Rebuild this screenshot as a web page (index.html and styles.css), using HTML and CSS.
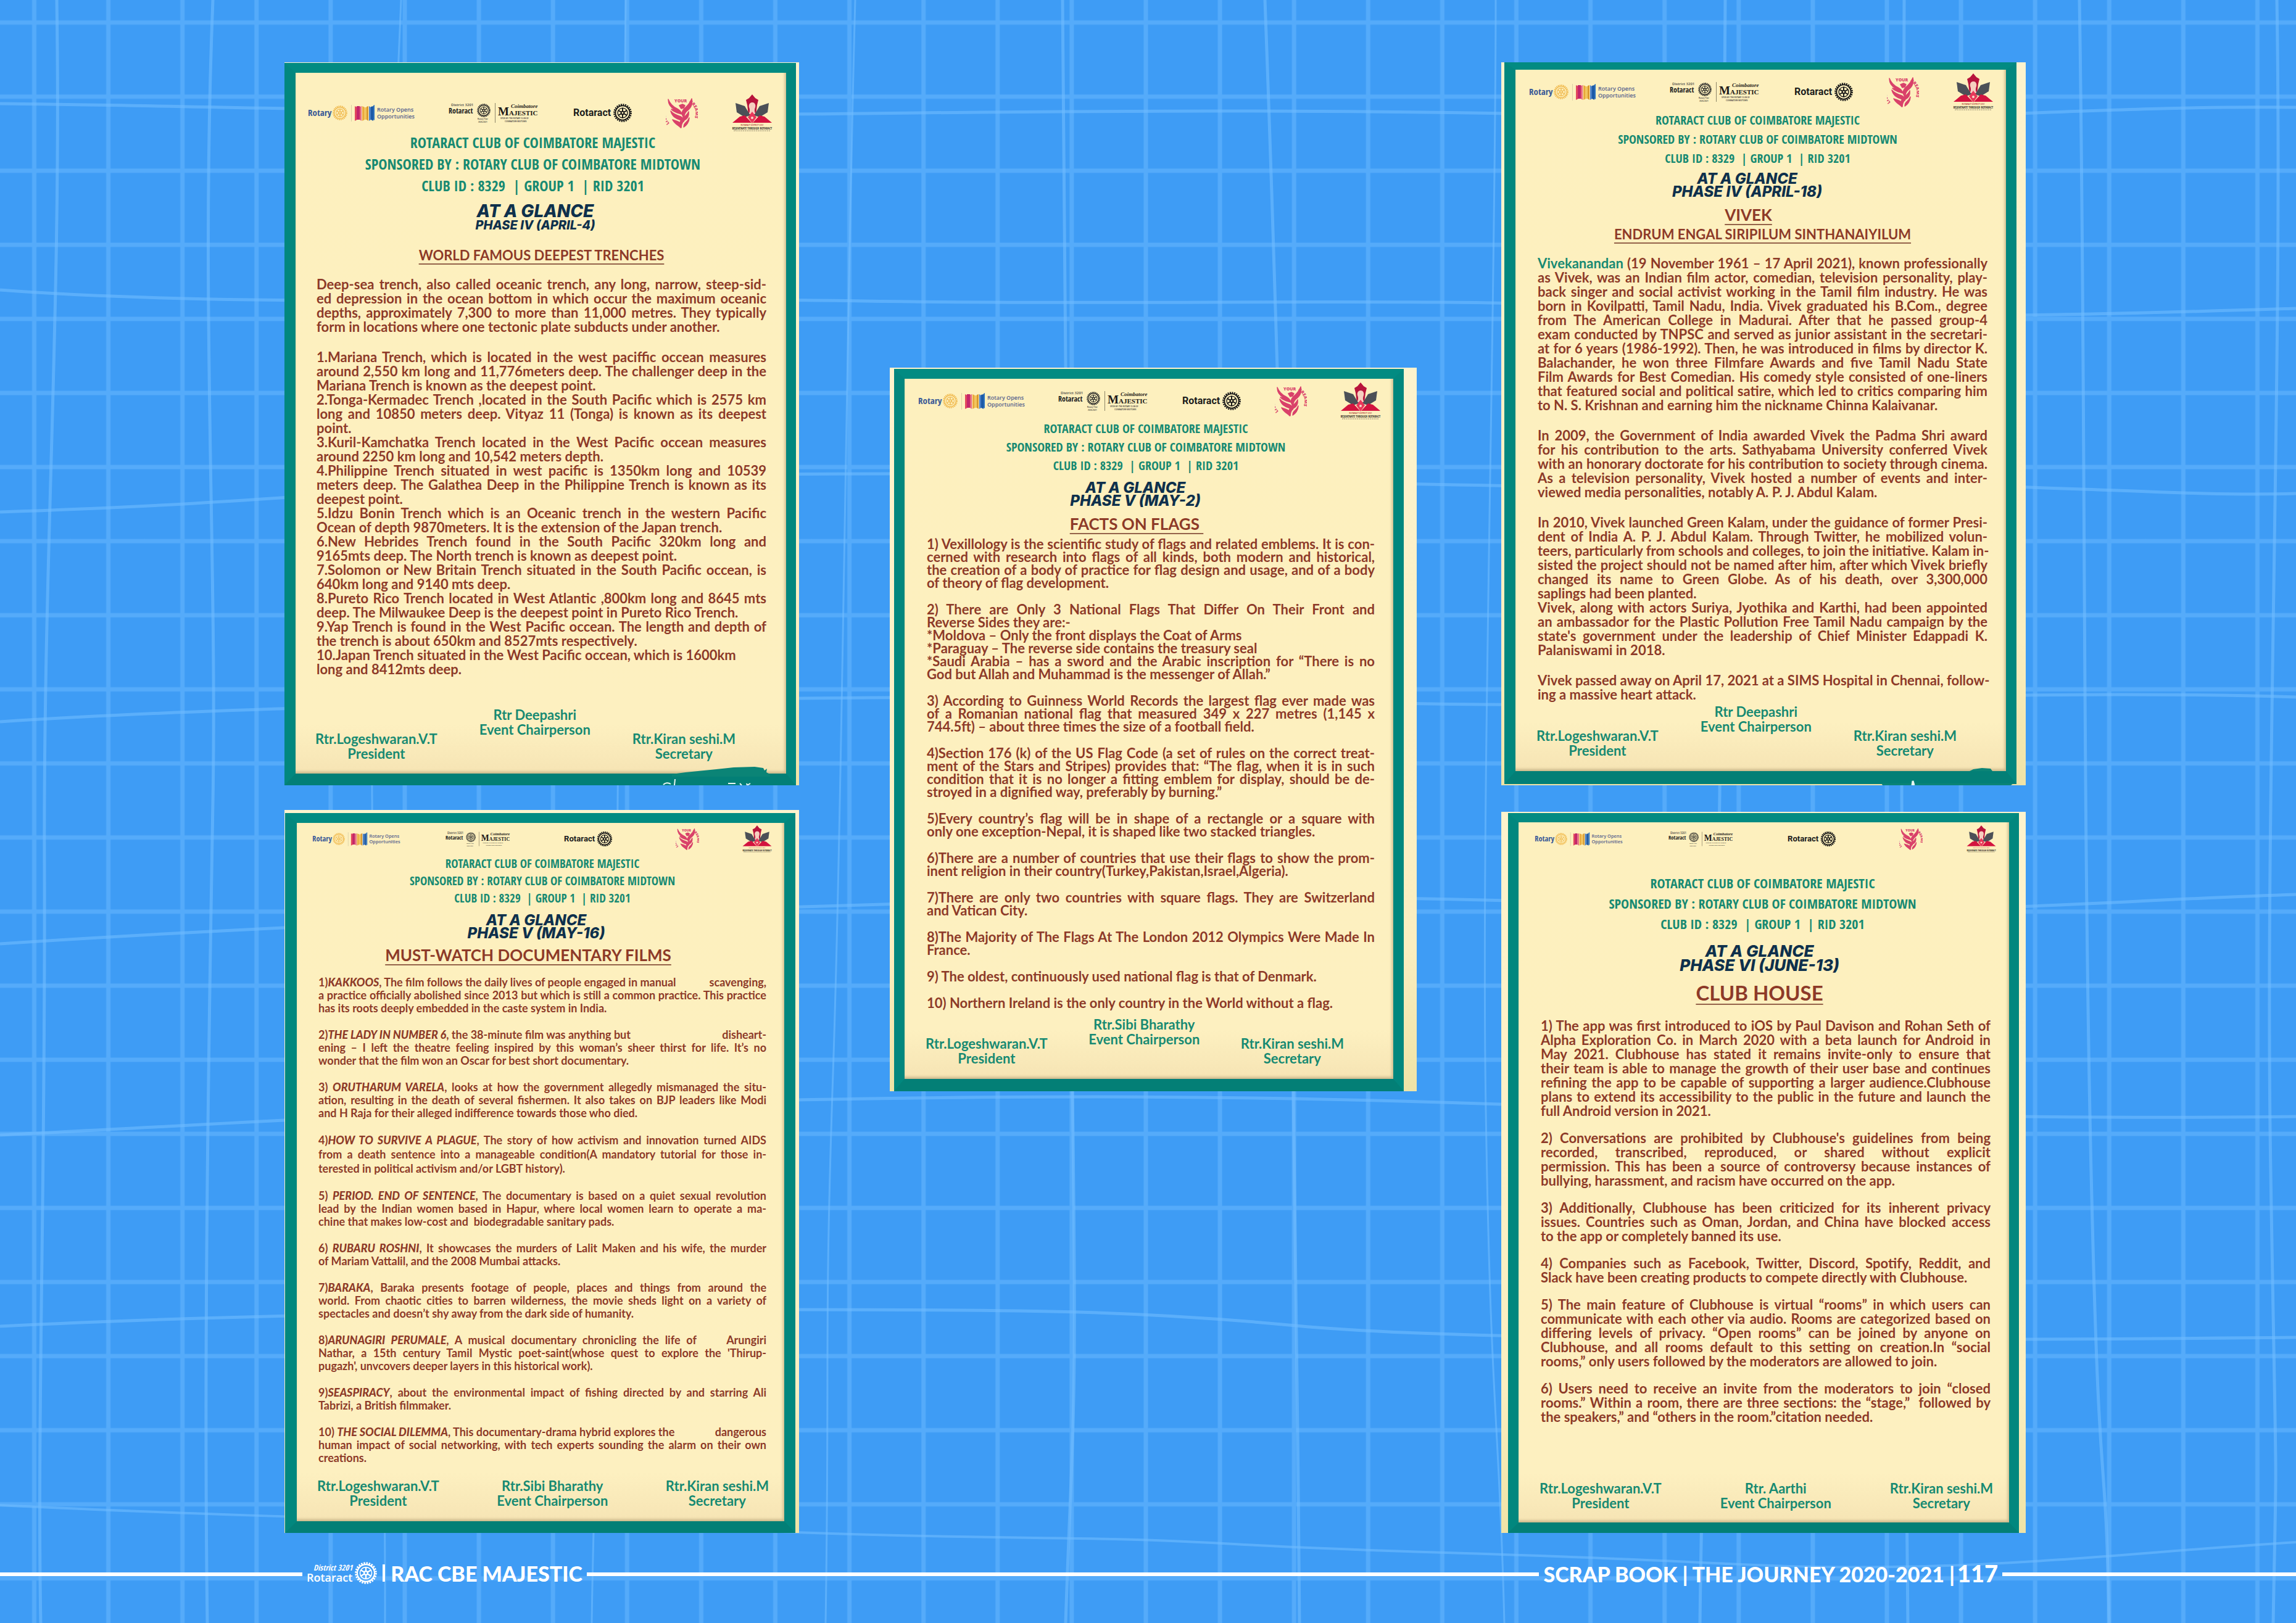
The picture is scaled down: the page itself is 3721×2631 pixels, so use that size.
FILE: index.html
```html
<!DOCTYPE html>
<html lang="en">
<head>
<meta charset="utf-8">
<title>Scrap Book | The Journey 2020-2021</title>
<link rel="stylesheet" href="styles.css">
</head>
<body>
<svg class="defs" aria-hidden="true">
  <symbol id="gear" viewBox="0 0 40 40">
    <g fill="none" stroke="currentColor">
      <circle cx="20" cy="20" r="18" stroke-width="3.6" stroke-dasharray="2.8 1.912"/>
      <circle cx="20" cy="20" r="15.5" stroke-width="2.4"/>
      <circle cx="20" cy="20" r="10.6" stroke-width="1.8"/>
      <circle cx="20" cy="20" r="3.2" stroke-width="2.6"/>
      <path d="M20 16V9M20 24v7M16.500 18l-6-3.500M23.500 22l6 3.500M23.500 18l6-3.500M16.500 22l-6 3.500" stroke-width="2.6"/>
    </g>
  </symbol>
  <symbol id="rotary" viewBox="0 0 173 34">
    <text x="0" y="22" font-size="15" class="lg-cond" fill="#3a5a96">Rotary</text>
    <use href="#gear" x="40" y="5" width="24" height="24" color="#f1bd55"/>
    <path d="M70.500 4v27" stroke="#d9cfa5"/>
    <path d="M76 6l4 2v20l-4 2z" fill="#e2475f"/><path d="M79 6h5v22h-5z" fill="#c4266a"/><path d="M84 7l3-1v24l-3-2z" fill="#e56a7f"/>
    <path d="M88 6l4 2v20l-4 2z" fill="#e9a83d"/><path d="M91 8h4v20h-4z" fill="#f2c55c"/><path d="M95 7l3-1v24l-3-2z" fill="#d99a2f"/>
    <path d="M99 6l3 2v20l-3 2z" fill="#4a7fc4"/><path d="M102 7l4-1v24l-4-2z" fill="#1d5aa6"/><path d="M106 5l2-1v25l-2-1z" fill="#2c72bf"/>
    <text x="112" y="15" font-size="9" class="lg-sans" fill="#56618c">Rotary Opens</text>
    <text x="112" y="26" font-size="9" class="lg-sans" fill="#56618c">Opportunities</text>
  </symbol>
  <symbol id="majestic" viewBox="0 0 147 34">
    <text x="4" y="6" font-size="6" class="lg-sans" fill="#444">District 3201</text>
    <text x="0" y="18" font-size="12" class="lg-cond" fill="#222">Rotaract</text>
    <use href="#gear" x="46" y="2" width="22" height="22" color="#2a2a28"/>
    <text x="47" y="28" font-size="3" class="lg-sans" fill="#333">Rotary Year</text>
    <text x="48" y="33" font-size="3" class="lg-sans" fill="#333">2020-2021</text>
    <path d="M75.500 1v32" stroke="#8d8568"/>
    <text x="80" y="21" font-size="19" class="lg-serif" fill="#1d1a18">M</text>
    <text x="98" y="21" font-size="11" class="lg-serif" fill="#1d1a18">AJESTIC</text>
    <text x="101" y="9" font-size="9" class="lg-script" fill="#1d1a18">Coimbatore</text>
    <text x="84" y="27" font-size="3" class="lg-sans" fill="#333">SPON BY: THE ROTARY CLUB OF</text>
    <text x="91" y="32" font-size="3" class="lg-sans" fill="#333">COIMBATORE MIDTOWN</text>
  </symbol>
  <symbol id="rotaract" viewBox="0 0 96 34">
    <text x="0" y="22" font-size="16" class="lg-rob" fill="#1b1b1b">Rotaract</text>
    <use href="#gear" x="65" y="2" width="30" height="30" color="#151515"/>
  </symbol>
  <symbol id="dreams" viewBox="0 0 52 50">
    <defs><path id="ring" d="M6 42A21 22 0 0 1 26 5A21 21 0 0 1 38 44"/></defs>
    <g fill="#d9416a" stroke="#d9416a" stroke-width="1.5" stroke-linejoin="round">
      <path d="M4 3c3 8 8 12 14 15c4 2 7 5 8 9c-7-2-13-3-17-8c3 1 5 1 6 1c-6-3-11-9-11-17z"/>
      <path d="M42 2c2 10-2 16-8 20c-3 3-5 6-4 12c-4-5-5-11 0-16c4-4 9-7 12-16z"/>
      <path d="M22 13l5-2l4 2l-2 4l-4 1z"/>
      <path d="M8 22c4 5 10 7 16 9c4 2 6 5 5 8c-6-4-17-3-21-17z"/>
      <path d="M37 23c1 8-3 12-7 14c-3 3-5 6-5 12c-4-7-1-13 3-16c4-3 7-5 9-10z"/>
      <path d="M11 36c5 2 11 3 13 6c1 2 1 5 0 7c-3-4-9-5-13-13z"/>
      <path d="M38 33c-2 5-5 7-7 9c-2 2-2 4-2 6c4-2 9-8 9-15z"/>
    </g>
    <text font-size="7" class="lg-bold" fill="#d9416a"><textPath href="#ring" startOffset="0">LIVE</textPath></text>
    <text font-size="7" class="lg-bold" fill="#d9416a" x="14" y="8">YOUR</text>
    <text font-size="7" class="lg-bold" fill="#d9416a"><textPath href="#ring" startOffset="68">DREAMS</textPath></text>
  </symbol>
  <symbol id="lotus" viewBox="0 0 66 60">
    <path d="M33 0l5 6l5 3l-2 8l-2 16h-12l-2-16l-2-8l5-3z" fill="#b8143c"/>
    <path d="M33 13c5 0 6 5 5 8c-2 5-1 8 1 11h-12c2-3 3-6 1-11c-1-4 1-8 5-8z" fill="#f6cfc0"/>
    <path d="M6 14l15 5l9 15l-9 3l-13-8z" fill="#4c5057"/><path d="M60 14l-15 5l-9 15l9 3l13-8z" fill="#4c5057"/>
    <path d="M1 46l12-10l8-2l11 12z" fill="#d3143f"/><path d="M65 46l-12-10l-8-2l-11 12z" fill="#d3143f"/>
    <path d="M33 28l7 9l-7 10l-7-10z" fill="#e8375a"/><circle cx="33" cy="38" r="2" fill="#f9d9c8"/>
    <text x="33" y="51" text-anchor="middle" font-size="3" class="lg-sans" fill="#a33">ROTARACT DISTRICT 3201</text>
    <text x="33" y="57" text-anchor="middle" font-size="5" class="lg-cond" fill="#35302a">REJUVENATE THROUGH ROTARACT</text>
    <path d="M3 59h60" stroke="#8b8166" stroke-dasharray="2 1"/>
  </symbol>
</svg>

<svg class="grid-art" viewBox="0 0 3721 2631" preserveAspectRatio="none" aria-hidden="true">
  <defs><pattern id="squares" x="-5" y="-24" width="120.100" height="120.100" patternUnits="userSpaceOnUse"><path d="M60.500 0v120.100M0 60.500h120.100" stroke="#5cb0fc" stroke-opacity=".75" stroke-width="7"/></pattern></defs>
  <rect width="3721" height="2631" fill="#3e9cf5"/>
  <rect width="3721" height="2631" fill="url(#squares)"/>
  <g fill="none" stroke="#6fbcff" stroke-opacity=".6" stroke-width="5">
    <path d="M92 0C100 500 70 900 72 1400S60 2300 66 2631"/>
    <path d="M345 0C325 500 352 900 345 1300S330 2200 336 2631"/>
    <path d="M650 0C630 500 600 900 603 1290S625 2200 624 2631" stroke-width="3"/>
    <path d="M1014 0C1008 500 1003 900 1001 1300S965 2200 959 2631" stroke-width="3"/>
    <path d="M1386 0C1372 500 1365 1300 1350 1740S1345 2200 1338 2631" stroke-width="3"/>
    <path d="M1722 0C1728 400 1730 1200 1738 1768S1738 2300 1727 2631"/>
    <path d="M2050 0C2065 400 2090 1200 2096 1768S2104 2300 2106 2631"/>
    <path d="M2424 0C2424 500 2400 1300 2408 1800S2430 2300 2438 2631" stroke-width="3"/>
    <path d="M2796 0C2790 500 2792 900 2787 1290S2760 2200 2755 2631"/>
    <path d="M3086 0C3085 500 3082 900 3082 1290S3088 2200 3092 2631"/>
    <path d="M3370 0C3380 600 3375 1300 3389 1900S3412 2300 3418 2631"/>
    <path d="M3690 0C3700 600 3670 1300 3680 1900S3690 2300 3684 2631"/>
    <path d="M0 168C400 172 900 190 1400 184S2300 178 2700 190S3400 170 3721 174"/>
    <path d="M0 470C400 500 900 480 1400 488S2300 480 2700 500S3400 510 3721 500"/>
    <path d="M0 830C300 820 440 808 700 790S1200 768 1440 768S2700 800 3000 790S3500 806 3721 800"/>
    <path d="M0 1170C300 1150 700 1140 1300 1132S2300 1150 2700 1140S3400 1120 3721 1130"/>
    <path d="M0 1530C300 1510 700 1490 1300 1470S2300 1450 2700 1470S3400 1460 3721 1450"/>
    <path d="M0 1840C400 1820 900 1790 1290 1783S2000 1775 2430 1790S3300 1815 3721 1810"/>
    <path d="M0 2150C400 2130 900 2123 1290 2123S1850 2125 2100 2149S3000 2175 3721 2168"/>
    <path d="M0 2440C400 2460 900 2470 1290 2484S1740 2488 2000 2503S2430 2516 2800 2535S3400 2520 3721 2500" stroke-width="4"/>
  </g>
</svg>

<main class="board">
  <div class="column left">
    <article class="card trenches">
      <div class="paper">
        <div class="logos"><svg class="l1"><use href="#rotary"/></svg><svg class="l2"><use href="#majestic"/></svg><svg class="l3"><use href="#rotaract"/></svg><svg class="l4"><use href="#dreams"/></svg><svg class="l5"><use href="#lotus"/></svg></div>
        <p class="club">ROTARACT CLUB OF COIMBATORE MAJESTIC<br>SPONSORED BY : ROTARY CLUB OF COIMBATORE MIDTOWN<br>CLUB ID : 8329 &nbsp;| GROUP 1 &nbsp;| RID 3201</p>
        <p class="glance"><span>AT A GLANCE</span><span class="phase">PHASE IV (APRIL-4)</span></p>
        <h2>WORLD FAMOUS DEEPEST TRENCHES</h2>
        <div class="text">
          <p><span>Deep-sea trench, also called oceanic trench, any long, narrow, steep-sid-</span><span>ed depression in the ocean bottom in which occur the maximum oceanic</span><span>depths, approximately 7,300 to more than 11,000 metres. They typically</span><span>form in locations where one tectonic plate subducts under another.</span></p>
          <p><span>1.Mariana Trench, which is located in the west paciffic occean measures</span><span>around 2,550 km long and 11,776meters deep. The challenger deep in the</span><span>Mariana Trench is known as the deepest point.</span></p>
          <p class="run"><span>2.Tonga-Kermadec Trench ,located in the South Pacific which is 2575 km</span><span>long and 10850 meters deep. Vityaz 11 (Tonga) is known as its deepest</span><span>point.</span></p>
          <p class="run"><span>3.Kuril-Kamchatka Trench located in the West Pacific occean measures</span><span>around 2250 km long and 10,542 meters depth.</span></p>
          <p class="run"><span>4.Philippine Trench situated in west pacific is 1350km long and 10539</span><span>meters deep. The Galathea Deep in the Philippine Trench is known as its</span><span>deepest point.</span></p>
          <p class="run"><span>5.Idzu Bonin Trench which is an Oceanic trench in the western Pacific</span><span>Ocean of depth 9870meters. It is the extension of the Japan trench.</span></p>
          <p class="run"><span>6.New Hebrides Trench found in the South Pacific 320km long and</span><span>9165mts deep. The North trench is known as deepest point.</span></p>
          <p class="run"><span>7.Solomon or New Britain Trench situated in the South Pacific occean, is</span><span>640km long and 9140 mts deep.</span></p>
          <p class="run"><span>8.Pureto Rico Trench located in West Atlantic ,800km long and 8645 mts</span><span>deep. The Milwaukee Deep is the deepest point in Pureto Rico Trench.</span></p>
          <p class="run"><span>9.Yap Trench is found in the West Pacific occean. The length and depth of</span><span>the trench is about 650km and 8527mts respectively.</span></p>
          <p class="run ragged"><span>10.Japan Trench situated in the West Pacific occean, which is 1600km</span><span>long and 8412mts deep.</span></p>
        </div>
        <footer class="signs stepped"><p>Rtr.Logeshwaran.V.T<br>President</p><p class="chair">Rtr Deepashri<br>Event Chairperson</p><p>Rtr.Kiran seshi.M<br>Secretary</p></footer>
      </div>
      <svg class="brush" viewBox="0 0 220 32" aria-hidden="true"><path d="M40 14l22-3l20-2l30-3l28-3l34-1l14 2l2 4l4-3l-1 6l6 3v4H40z" fill="#0b8476"/><path d="M26 31c3-3 8-4 12-1M44 32l1-10M131 29h12M150 29l3 3M161 29l1 3l5-3" fill="none" stroke="#e8f7f2" stroke-width="2"/></svg>
    </article>

    <article class="card films">
      <div class="paper">
        <div class="logos small"><svg class="l1"><use href="#rotary"/></svg><svg class="l2"><use href="#majestic"/></svg><svg class="l3"><use href="#rotaract"/></svg><svg class="l4"><use href="#dreams"/></svg><svg class="l5"><use href="#lotus"/></svg></div>
        <p class="club">ROTARACT CLUB OF COIMBATORE MAJESTIC<br>SPONSORED BY : ROTARY CLUB OF COIMBATORE MIDTOWN<br>CLUB ID : 8329 &nbsp;| GROUP 1 &nbsp;| RID 3201</p>
        <p class="glance"><span>AT A GLANCE</span><span>PHASE V (MAY-16)</span></p>
        <h2>MUST-WATCH DOCUMENTARY FILMS</h2>
        <div class="text">
          <p><span class="split"><span>1)<em>KAKKOOS</em>, The film follows the daily lives of people engaged in manual</span> <span>scavenging,</span></span><span>a practice officially abolished since 2013 but which is still a common practice. This practice</span><span>has its roots deeply embedded in the caste system in India.</span></p>
          <p><span class="split"><span>2)<em>THE LADY IN NUMBER 6</em>, the 38-minute film was anything but</span> <span>disheart-</span></span><span>ening – I left the theatre feeling inspired by this woman’s sheer thirst for life. It’s no</span><span>wonder that the film won an Oscar for best short documentary.</span></p>
          <p><span>3) <em>ORUTHARUM VARELA</em>, looks at how the government allegedly mismanaged the situ-</span><span>ation, resulting in the death of several fishermen. It also takes on BJP leaders like Modi</span><span>and H Raja for their alleged indifference towards those who died.</span></p>
          <p class="loose"><span>4)<em>HOW TO SURVIVE A PLAGUE</em>, The story of how activism and innovation turned AIDS</span><span>from a death sentence into a manageable condition(A mandatory tutorial for those in-</span><span>terested in political activism and/or LGBT history).</span></p>
          <p><span>5) <em>PERIOD. END OF SENTENCE</em>, The documentary is based on a quiet sexual revolution</span><span>lead by the Indian women based in Hapur, where local women learn to operate a ma-</span><span>chine that makes low-cost and &nbsp;biodegradable sanitary pads.</span></p>
          <p><span>6) <em>RUBARU ROSHNI</em>, It showcases the murders of Lalit Maken and his wife, the murder</span><span>of Mariam Vattalil, and the 2008 Mumbai attacks.</span></p>
          <p><span>7)<em>BARAKA</em>, Baraka presents footage of people, places and things from around the</span><span>world. From chaotic cities to barren wilderness, the movie sheds light on a variety of</span><span>spectacles and doesn’t shy away from the dark side of humanity.</span></p>
          <p><span>8)<em>ARUNAGIRI PERUMALE</em>, A musical documentary chronicling the life of &nbsp; &nbsp; Arungiri</span><span>Nathar, a 15th century Tamil Mystic poet-saint(whose quest to explore the 'Thirup-</span><span>pugazh', unvcovers deeper layers in this historical work).</span></p>
          <p><span>9)<em>SEASPIRACY</em>, about the environmental impact of fishing directed by and starring Ali</span><span>Tabrizi, a British filmmaker.</span></p>
          <p><span class="split"><span>10) <em>THE SOCIAL DILEMMA</em>, This documentary-drama hybrid explores the</span> <span>dangerous</span></span><span>human impact of social networking, with tech experts sounding the alarm on their own</span><span>creations.</span></p>
        </div>
        <footer class="signs"><p>Rtr.Logeshwaran.V.T<br>President</p><p class="chair">Rtr.Sibi Bharathy<br>Event Chairperson</p><p>Rtr.Kiran seshi.M<br>Secretary</p></footer>
      </div>
    </article>
  </div>

  <div class="column middle">
    <article class="card flags">
      <div class="paper">
        <div class="logos"><svg class="l1"><use href="#rotary"/></svg><svg class="l2"><use href="#majestic"/></svg><svg class="l3"><use href="#rotaract"/></svg><svg class="l4"><use href="#dreams"/></svg><svg class="l5"><use href="#lotus"/></svg></div>
        <p class="club">ROTARACT CLUB OF COIMBATORE MAJESTIC<br>SPONSORED BY : ROTARY CLUB OF COIMBATORE MIDTOWN<br>CLUB ID : 8329 &nbsp;| GROUP 1 &nbsp;| RID 3201</p>
        <p class="glance"><span>AT A GLANCE</span><span>PHASE V (MAY-2)</span></p>
        <h2>FACTS ON FLAGS&nbsp;</h2>
        <div class="text">
          <p><span>1) Vexillology is the scientific study of flags and related emblems. It is con-</span><span>cerned with research into flags of all kinds, both modern and historical,</span><span>the creation of a body of practice for flag design and usage, and of a body</span><span>of theory of flag development.</span></p>
          <p><span>2) There are Only 3 National Flags That Differ On Their Front and</span><span>Reverse Sides they are:-</span></p>
          <p class="run"><span>*Moldova – Only the front displays the Coat of Arms</span></p>
          <p class="run"><span>*Paraguay – The reverse side contains the treasury seal</span></p>
          <p class="run"><span>*Saudi Arabia – has a sword and the Arabic inscription for “There is no</span><span>God but Allah and Muhammad is the messenger of Allah.”</span></p>
          <p><span>3) According to Guinness World Records the largest flag ever made was</span><span>of a Romanian national flag that measured 349 x 227 metres (1,145 x</span><span>744.5ft) – about three times the size of a football field.</span></p>
          <p><span>4)Section 176 (k) of the US Flag Code (a set of rules on the correct treat-</span><span>ment of the Stars and Stripes) provides that: “The flag, when it is in such</span><span>condition that it is no longer a fitting emblem for display, should be de-</span><span>stroyed in a dignified way, preferably by burning.”</span></p>
          <p><span>5)Every country’s flag will be in shape of a rectangle or a square with</span><span>only one exception-Nepal, it is shaped like two stacked triangles.</span></p>
          <p><span>6)There are a number of countries that use their flags to show the prom-</span><span>inent religion in their country(Turkey,Pakistan,Israel,Algeria).</span></p>
          <p><span>7)There are only two countries with square flags. They are Switzerland</span><span>and Vatican City.</span></p>
          <p><span>8)The Majority of The Flags At The London 2012 Olympics Were Made In</span><span>France.</span></p>
          <p><span>9) The oldest, continuously used national flag is that of Denmark.</span></p>
          <p><span>10) Northern Ireland is the only country in the World without a flag.</span></p>
        </div>
        <footer class="signs stepped"><p>Rtr.Logeshwaran.V.T<br>President</p><p class="chair">Rtr.Sibi Bharathy<br>Event Chairperson</p><p>Rtr.Kiran seshi.M<br>Secretary</p></footer>
      </div>
    </article>
  </div>

  <div class="column right">
    <article class="card vivek">
      <div class="paper">
        <div class="logos"><svg class="l1"><use href="#rotary"/></svg><svg class="l2"><use href="#majestic"/></svg><svg class="l3"><use href="#rotaract"/></svg><svg class="l4"><use href="#dreams"/></svg><svg class="l5"><use href="#lotus"/></svg></div>
        <p class="club">ROTARACT CLUB OF COIMBATORE MAJESTIC<br>SPONSORED BY : ROTARY CLUB OF COIMBATORE MIDTOWN<br>CLUB ID : 8329 &nbsp;| GROUP 1 &nbsp;| RID 3201</p>
        <p class="glance"><span>AT A GLANCE</span><span>PHASE IV (APRIL-18)</span></p>
        <h2>VIVEK</h2>
        <h3>ENDRUM ENGAL SIRIPILUM SINTHANAIYILUM</h3>
        <div class="text">
          <p><span><mark>Vivekanandan</mark> (19 November 1961 – 17 April 2021), known professionally</span><span>as Vivek, was an Indian film actor, comedian, television personality, play-</span><span>back singer and social activist working in the Tamil film industry. He was</span><span>born in Kovilpatti, Tamil Nadu, India. Vivek graduated his B.Com., degree</span><span>from The American College in Madurai. After that he passed group-4</span><span>exam conducted by TNPSC and served as junior assistant in the secretari-</span><span>at for 6 years (1986-1992). Then, he was introduced in films by director K.</span><span>Balachander, he won three Filmfare Awards and five Tamil Nadu State</span><span>Film Awards for Best Comedian. His comedy style consisted of one-liners</span><span>that featured social and political satire, which led to critics comparing him</span><span>to N. S. Krishnan and earning him the nickname Chinna Kalaivanar.</span></p>
          <p><span>In 2009, the Government of India awarded Vivek the Padma Shri award</span><span>for his contribution to the arts. Sathyabama University conferred Vivek</span><span>with an honorary doctorate for his contribution to society through cinema.</span><span>As a television personality, Vivek hosted a number of events and inter-</span><span>viewed media personalities, notably A. P. J. Abdul Kalam.</span></p>
          <p><span>In 2010, Vivek launched Green Kalam, under the guidance of former Presi-</span><span>dent of India A. P. J. Abdul Kalam. Through Twitter, he mobilized volun-</span><span>teers, particularly from schools and colleges, to join the initiative. Kalam in-</span><span>sisted the project should not be named after him, after which Vivek briefly</span><span>changed its name to Green Globe. As of his death, over 3,300,000</span><span>saplings had been planted.</span></p>
          <p class="run"><span>Vivek, along with actors Suriya, Jyothika and Karthi, had been appointed</span><span>an ambassador for the Plastic Pollution Free Tamil Nadu campaign by the</span><span>state's government under the leadership of Chief Minister Edappadi K.</span><span>Palaniswami in 2018.</span></p>
          <p><span>Vivek passed away on April 17, 2021 at a SIMS Hospital in Chennai, follow-</span><span>ing a massive heart attack.</span></p>
        </div>
        <footer class="signs stepped"><p>Rtr.Logeshwaran.V.T<br>President</p><p class="chair">Rtr Deepashri<br>Event Chairperson</p><p>Rtr.Kiran seshi.M<br>Secretary</p></footer>
      </div>
      <svg class="brush" viewBox="0 0 220 32" aria-hidden="true"><path d="M145 9l6-3l14-2l14 1l3 4zM2 29h214l-4 3H4z" fill="#0b8476"/><path d="M52 32l1-7l2 7" fill="none" stroke="#e8f7f2" stroke-width="3"/></svg>
    </article>

    <article class="card clubhouse">
      <div class="paper">
        <div class="logos small"><svg class="l1"><use href="#rotary"/></svg><svg class="l2"><use href="#majestic"/></svg><svg class="l3"><use href="#rotaract"/></svg><svg class="l4"><use href="#dreams"/></svg><svg class="l5"><use href="#lotus"/></svg></div>
        <p class="club">ROTARACT CLUB OF COIMBATORE MAJESTIC<br>SPONSORED BY : ROTARY CLUB OF COIMBATORE MIDTOWN<br>CLUB ID : 8329 &nbsp;| GROUP 1 &nbsp;| RID 3201</p>
        <p class="glance"><span>AT A GLANCE</span><span>PHASE VI (JUNE-13)</span></p>
        <h2>CLUB HOUSE</h2>
        <div class="text">
          <p><span>1) The app was first introduced to iOS by Paul Davison and Rohan Seth of</span><span>Alpha Exploration Co. in March 2020 with a beta launch for Android in</span><span>May 2021. Clubhouse has stated it remains invite-only to ensure that</span><span>their team is able to manage the growth of their user base and continues</span><span>refining the app to be capable of supporting a larger audience.Clubhouse</span><span>plans to extend its accessibility to the public in the future and launch the</span><span>full Android version in 2021.</span></p>
          <p><span>2) Conversations are prohibited by Clubhouse's guidelines from being</span><span>recorded, transcribed, reproduced, or shared without explicit</span><span>permission. This has been a source of controversy because instances of</span><span>bullying, harassment, and racism have occurred on the app.</span></p>
          <p><span>3) Additionally, Clubhouse has been criticized for its inherent privacy</span><span>issues. Countries such as Oman, Jordan, and China have blocked access</span><span>to the app or completely banned its use.</span></p>
          <p><span>4) Companies such as Facebook, Twitter, Discord, Spotify, Reddit, and</span><span>Slack have been creating products to compete directly with Clubhouse.</span></p>
          <p><span>5) The main feature of Clubhouse is virtual “rooms” in which users can</span><span>communicate with each other via audio. Rooms are categorized based on</span><span>differing levels of privacy. “Open rooms” can be joined by anyone on</span><span>Clubhouse, and all rooms default to this setting on creation.In “social</span><span>rooms,” only users followed by the moderators are allowed to join.</span></p>
          <p><span>6) Users need to receive an invite from the moderators to join “closed</span><span>rooms.” Within a room, there are three sections: the “stage,” &nbsp;followed by</span><span>the speakers,” and “others in the room.”citation needed.</span></p>
        </div>
        <footer class="signs"><p>Rtr.Logeshwaran.V.T<br>President</p><p class="chair">Rtr. Aarthi<br>Event Chairperson</p><p>Rtr.Kiran seshi.M<br>Secretary</p></footer>
      </div>
    </article>
  </div>
</main>

<footer class="strip">
  <span class="bar start"></span>
  <div class="brand">
    <p class="district"><i>District 3201</i><b>Rotaract</b></p>
    <svg class="wheel" aria-hidden="true"><use href="#gear"/></svg>
    <span class="pipe"></span>
    <strong>RAC CBE MAJESTIC</strong>
  </div>
  <span class="bar center"></span>
  <p class="folio"><strong>SCRAP BOOK | THE JOURNEY 2020-2021 |</strong> <b>117</b></p>
  <span class="bar end"></span>
</footer>
</body>
</html>
```
FILE: styles.css
```css
* { box-sizing: border-box; margin: 0; }

body {
  position: relative;
  min-height: 100vh;
  padding-top: 101px;
  background: #3e9cf5;
  font-family: Lato, "Open Sans", sans-serif;
  font-weight: 700;
  color: #8d3a28;
}

.defs { display: none; }
.grid-art { position: absolute; inset: 0; width: 100%; height: 100%; z-index: -1; }

.lg-cond { font-family: "Open Sans Condensed", "Roboto Condensed", sans-serif; font-weight: 700; }
.lg-sans { font-family: "Open Sans", sans-serif; font-weight: 600; }
.lg-bold { font-family: "Open Sans", sans-serif; font-weight: 800; }
.lg-rob { font-family: Roboto, sans-serif; font-weight: 700; }
.lg-serif { font-family: "Liberation Serif", serif; font-weight: 700; }
.lg-script { font-family: "Liberation Serif", serif; font-weight: 700; font-style: italic; }

/* board: three card columns with gutters between them */
.board {
  display: grid;
  grid-template-columns: 461fr minmax(0, 834fr) 147fr minmax(0, 854fr) 137fr minmax(0, 850fr) 438fr;
}
.column { display: flex; flex-direction: column; }
.column.left { grid-column: 2; gap: 40px; }
.column.middle { grid-column: 4; padding-top: 495px; }
.column.right { grid-column: 6; gap: 43px; }

/* cards */
.card {
  position: relative;
  background: linear-gradient(#fdf3cd, #fbeec0 80%, #efe3a6);
}
.paper {
  border: 17px solid;
  border-color: #028b82 #02877e #037f76;
  background: linear-gradient(#fdf0be, #fdf0c0 93%, #f6e4b4);
  box-shadow: inset -2px -3px 4px #c9b78a;
}
.trenches { padding: 1px 5px 0 0; }
.trenches .paper { border-width: 16px 16px 19px 18px; padding: 35px 32px 20px 34px; }
.films { padding: 5px 6px 0 1px; }
.films .paper { border-width: 16px 18px 19px 19px; padding: 4px 29px 21px 35px; }
.flags { padding: 2px 21px 0 7px; }
.flags .paper { border-width: 16px 17px 20px; padding: 6px 30px 21px 36px; }
.vivek { padding: 0 15px 2px 5px; }
.vivek .paper { border-width: 12px 17px 21px 18px; padding: 6px 30px 21px 36px; }
.clubhouse { padding: 2px 11px 0; }
.clubhouse .paper { border-width: 15px 16px 17px 17px; padding: 5px 30px 19px 36px; }

.brush { position: absolute; right: 26px; bottom: 0; width: 220px; height: 32px; }
.vivek .brush { right: 16px; }

/* sponsor logos */
.logos { display: flex; align-items: center; justify-content: space-between; height: 60px; margin: 0 -10px 0 -14px; }
.l1 { width: 173px; height: 34px; }
.l2 { width: 147px; height: 34px; }
.l3 { width: 96px; height: 34px; }
.l4 { width: 52px; height: 50px; }
.l5 { width: 66px; height: 60px; }
.logos.small { height: 44px; }
.small .l1 { width: 151px; height: 28px; margin-right: -16px; }
.small .l2 { width: 106px; height: 26px; }
.small .l3 { width: 81px; height: 28px; }
.small .l4 { width: 38px; height: 36px; margin: 0 -16px 0 16px; }
.small .l5 { width: 50px; height: 44px; }

/* headings */
.club {
  font-family: "Open Sans Condensed", "Roboto Condensed", sans-serif;
  font-weight: 700;
  text-align: center;
  white-space: nowrap;
  color: #178a72;
}
.glance {
  font-family: Inter, sans-serif;
  font-weight: 800;
  font-style: italic;
  text-align: center;
  white-space: nowrap;
  color: #0e304c;
}
.glance span { display: block; }
h2, h3 {
  font-weight: 700;
  text-align: center;
  white-space: nowrap;
  text-decoration: underline #94634a;
  text-decoration-thickness: 2px;
  text-underline-offset: 5px;
}

.trenches .club { padding-right: 28px; font-size: 24px; line-height: 35px; }
.trenches .glance { margin-top: 13px; padding-right: 20px; font-size: 28px; line-height: 23px; }
.trenches .phase { font-size: 20px; }
.trenches h2 { margin-top: 24px; font-size: 22px; line-height: 26px; }

.films .club { margin-top: 4px; font-size: 19px; line-height: 28px; }
.films .glance { margin-top: 11px; padding-right: 20px; font-size: 24px; line-height: 21px; }
.films h2 { margin-top: 9px; padding-right: 46px; font-size: 26px; line-height: 32px; }

.flags .club { padding-right: 16px; font-size: 20px; line-height: 30px; }
.flags .glance { margin-top: 10px; padding-right: 50px; font-size: 24px; line-height: 21px; }
.flags h2 { margin-top: 11px; padding-right: 46px; font-size: 26px; line-height: 32px; }

.vivek .club { padding-right: 16px; font-size: 20px; line-height: 31px; }
.vivek .glance { margin-top: 7px; padding-right: 50px; font-size: 24px; line-height: 21px; }
.vivek h2 { margin-top: 11px; padding-right: 46px; font-size: 26px; line-height: 32px; }
.vivek h3 { margin-top: 3px; font-size: 22px; line-height: 26px; }

.clubhouse .club { margin-top: 33px; padding-right: 10px; font-size: 22px; line-height: 33px; }
.clubhouse .glance { margin-top: 16px; padding-right: 20px; font-size: 26px; line-height: 23px; }
.clubhouse h2 { margin-top: 15px; padding-right: 20px; font-size: 33px; line-height: 36px; }

/* running text: each span is one set line */
.text { font-size: 22px; line-height: 23px; }
.text p + p { margin-top: 22px; }
.text p + p.run { margin-top: 0; }
.text p > span { display: block; white-space: nowrap; text-align-last: justify; }
.text p > span:last-child, .text .ragged > span { text-align-last: left; }
.text p > span.split { display: flex; justify-content: space-between; }
.text em { font-weight: 900; }
mark { background: none; color: #178a72; }

.trenches .text { margin-top: 22px; }
.trenches .text p + p:not(.run) { margin-top: 26px; }
.films .text { margin-top: 18px; font-size: 18px; line-height: 21px; }
.films .loose { line-height: 23px; }
.flags .text { margin-top: 6px; line-height: 21px; }
.vivek .text { margin-top: 22px; }
.vivek .text p + p:not(.run) { margin-top: 26px; }
.clubhouse .text { margin-top: 24px; }
.clubhouse .text p + p { margin-top: 21px; }

/* signatures */
.signs {
  display: flex;
  justify-content: space-between;
  align-items: flex-end;
  margin: 0 -4px 0 -2px;
  font-size: 22px;
  line-height: 24px;
  text-align: center;
  white-space: nowrap;
  color: #178a72;
}
.signs.stepped { padding-right: 54px; }
.stepped .chair { margin-bottom: 39px; }
.trenches .signs { margin-top: 51px; }
.films .signs { margin-top: 23px; }
.flags .signs { margin-top: 13px; }
.flags .chair { margin-bottom: 31px; }
.vivek .signs { margin-top: 5px; }
.clubhouse .signs { margin-top: 93px; }

/* page strip */
.strip { display: flex; align-items: center; gap: 7px; height: 50px; margin-top: 40px; color: #fff; white-space: nowrap; }
.bar { height: 6px; margin-top: 4px; background: #fff; }
.bar.start { flex: 492 1 0; }
.bar.center { flex: 1550 1 0; }
.bar.end { flex: 478 1 0; }
.brand { display: flex; align-items: center; gap: 4px; }
.district { display: flex; flex-direction: column; text-align: right; }
.district i { font-family: "Open Sans Condensed", "Roboto Condensed", sans-serif; font-size: 13px; line-height: 14px; font-weight: 400; }
.district b { font-family: "Open Sans", sans-serif; font-size: 18px; line-height: 18px; font-weight: 600; }
.wheel { width: 36px; height: 36px; }
.pipe { width: 4px; height: 28px; margin: 0 5px; background: #fff; }
.brand strong, .folio strong { font-size: 34px; font-weight: 900; }
.folio b { font-size: 38px; font-weight: 900; }
```
